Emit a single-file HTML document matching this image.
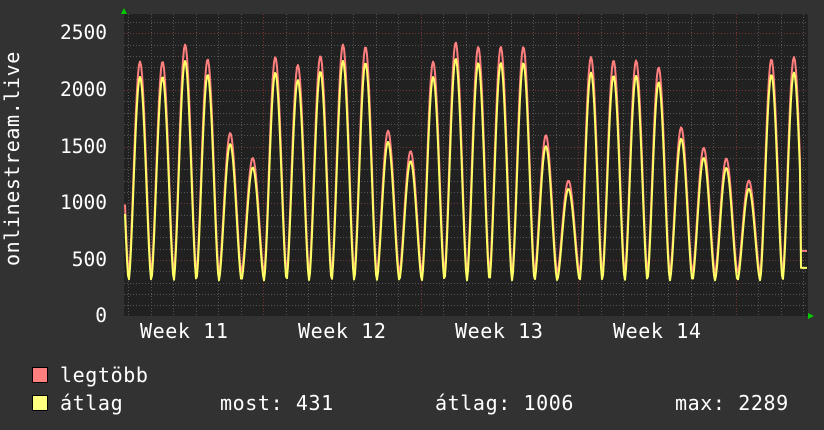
<!DOCTYPE html>
<html><head><meta charset="utf-8"><style>
html,body{margin:0;padding:0;background:#323232;}
body{width:824px;height:430px;overflow:hidden;position:relative;font-family:"DejaVu Sans Mono","Liberation Mono",monospace;color:#fff;}
.t{position:absolute;font-size:20px;line-height:22px;white-space:pre;letter-spacing:0.6px;}
.yl{position:absolute;right:717px;font-size:19.5px;line-height:22px;text-align:right;}
.box{position:absolute;left:32px;width:14px;height:14px;border:1px solid #000;}
</style></head><body>
<svg id="g" width="824" height="430" style="position:absolute;left:0;top:0">
<rect x="124" y="14" width="684" height="302" fill="#212121"/>
<g id="grid"></g>
<g id="data"></g>
<polygon points="121,14 124,8 127,14" fill="#0c0"/>
<polygon points="808,313 814,316 808,319" fill="#0c0"/>
</svg>
<div class="yl" style="top:22px">2500</div>
<div class="yl" style="top:79px">2000</div>
<div class="yl" style="top:136px">1500</div>
<div class="yl" style="top:192px">1000</div>
<div class="yl" style="top:249px">500</div>
<div class="yl" style="top:305px">0</div>
<div class="t" style="left:-88px;top:155px;transform:rotate(-90deg);width:200px;text-align:center">onlinestream.live</div>
<div class="t" style="left:140px;top:320px">Week 11</div>
<div class="t" style="left:298px;top:320px">Week 12</div>
<div class="t" style="left:455px;top:320px">Week 13</div>
<div class="t" style="left:613px;top:320px">Week 14</div>
<div class="box" style="top:367px;background:#ff7f7f"></div>
<div class="box" style="top:395px;background:#ffff7f"></div>
<div class="t" style="left:60px;top:364px">legtöbb</div>
<div class="t" style="left:60px;top:392px">átlag</div>
<div class="t" style="left:220px;top:392px">most: 431</div>
<div class="t" style="left:435px;top:392px">átlag: 1006</div>
<div class="t" style="left:675px;top:392px">max: 2289</div>
<script>
var ns="http://www.w3.org/2000/svg";
var grid=document.getElementById("grid"),data=document.getElementById("data");
function ln(x1,y1,x2,y2,c){var l=document.createElementNS(ns,"line");l.setAttribute("x1",x1);l.setAttribute("y1",y1);l.setAttribute("x2",x2);l.setAttribute("y2",y2);l.setAttribute("stroke",c);l.setAttribute("stroke-width",1);l.setAttribute("stroke-dasharray","1,2");grid.appendChild(l);}
function Y(v){return 316.6-v*0.11333;}
for(var v=100;v<=2800;v+=100){var y=Math.round(Y(v))+0.5;if(y<14)break;ln(124,y,808,y,v%500==0?"#7a3434":"#555");}
var x0=128;for(var i=0;i<32;i++){var x=Math.round(x0+22.5*i)+0.5;if(x<125||x>807)continue;ln(x,14,x,316,((i-6)%7==0)?"#7a3434":"#555");}
var pk=[2250,2250,2400,2270,1620,1400,2290,2220,2300,2400,2380,1640,1460,2250,2420,2380,2380,2380,1600,1200,2290,2260,2260,2200,1670,1490,1395,1200,2270,2290];
function val(x,avg){var t=(x-140)/22.55;var i=Math.round(t);var ph=t-i;i=Math.max(0,Math.min(29,i));var p=pk[i];var tr=avg?320:380;if(avg)p=p*0.94;
var f=Math.cos(Math.PI*ph);f=Math.pow(Math.abs(f),1.6);
return tr+(p-tr)*f;}
function path(avg,col){var pts=[];for(var x=125;x<=807;x+=1){var v=val(x,avg);if(x>800)v=avg?430:580;pts.push(x+","+Y(v).toFixed(1));}
var p=document.createElementNS(ns,"polyline");p.setAttribute("points",pts.join(" "));p.setAttribute("fill","none");p.setAttribute("stroke",col);p.setAttribute("stroke-width",2);p.setAttribute("stroke-linejoin","round");data.appendChild(p);}
path(false,"#ff7f7f");path(true,"#ffff66");
</script>
</body></html>
